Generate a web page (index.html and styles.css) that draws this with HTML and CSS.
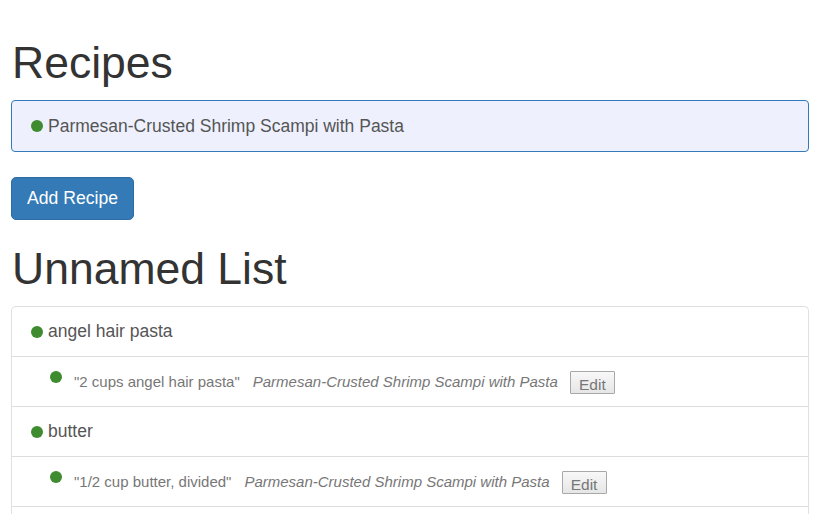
FILE: index.html
```html
<!DOCTYPE html>
<html>
<head>
<meta charset="utf-8">
<link rel="stylesheet" href="styles.css">
</head>
<body>
<div class="page">
  <h1 class="title">Recipes</h1>
  <div class="recipe-box">
    <span class="dot"></span><span class="recipe-name">Parmesan-Crusted Shrimp Scampi with Pasta</span>
  </div>
  <button class="btn-add">Add Recipe</button>
  <h1 class="title title-list">Unnamed List</h1>
  <div class="list">
    <div class="row">
      <span class="dot"></span><span class="item-name">angel hair pasta</span>
    </div>
    <div class="row sub">
      <span class="dot dot-sub"></span>
      <span class="quote">"2 cups angel hair pasta"</span>
      <span class="src">Parmesan-Crusted Shrimp Scampi with Pasta</span>
      <button class="btn-edit">Edit</button>
    </div>
    <div class="row">
      <span class="dot"></span><span class="item-name">butter</span>
    </div>
    <div class="row sub">
      <span class="dot dot-sub"></span>
      <span class="quote">"1/2 cup butter, divided"</span>
      <span class="src">Parmesan-Crusted Shrimp Scampi with Pasta</span>
      <button class="btn-edit">Edit</button>
    </div>
    <div class="row"></div>
  </div>
</div>
</body>
</html>
```

FILE: styles.css
```css
html, body {
  margin: 0;
  padding: 0;
  background: #fff;
}
body {
  font-family: "Liberation Sans", Arial, sans-serif;
  color: #333;
  overflow: hidden;
}
.page {
  padding: 0 15px 0 11px;
}
.title {
  font-size: 44.5px;
  font-weight: 400;
  line-height: 50px;
  margin: 38px 0 0 1px;
  color: #333;
}
.title-list {
  margin-top: 24px;
}
.recipe-box {
  margin-top: 12px;
  height: 50px;
  border: 1px solid #337ab7;
  border-radius: 4px;
  background: #eef1fd;
  display: flex;
  align-items: center;
  padding-left: 19px;
  font-size: 17.5px;
  color: #555;
}
.dot {
  display: inline-block;
  width: 12px;
  height: 12px;
  border-radius: 50%;
  background: #3f8b2f;
  margin-right: 5px;
  flex: none;
}
.btn-add {
  display: block;
  margin-top: 25px;
  height: 43px;
  width: 123px;
  padding: 0;
  border: 1px solid #2e6da4;
  border-radius: 5px;
  background: #337ab7;
  color: #fff;
  font-family: "Liberation Sans", Arial, sans-serif;
  font-size: 17.6px;
}
.list {
  margin-top: 12px;
  border: 1px solid #e0e0e0;
  border-bottom: none;
  border-radius: 5px 5px 0 0;
}
.row {
  height: 49px;
  display: flex;
  align-items: center;
  padding-left: 19px;
  border-top: 1px solid #ddd;
  font-size: 17.5px;
  color: #555;
}
.row:first-child {
  border-top: none;
}
.row.sub {
  padding-left: 38px;
  font-size: 15px;
  color: #777;
}
.dot-sub {
  margin-right: 12px;
  position: relative;
  top: -5px;
}
.quote {
  margin-right: 13px;
}
.src {
  font-style: italic;
  margin-right: 13px;
}
.btn-edit {
  height: 23px;
  width: 45px;
  padding: 0;
  margin-top: 2px;
  margin-left: -1px;
  border: 1px solid #a8a8a8;
  border-radius: 1px;
  background: linear-gradient(#f8f8f8, #e6e6e6);
  color: #777;
  font-family: "Liberation Sans", Arial, sans-serif;
  font-size: 15.5px;
  line-height: 26px;
}
```
